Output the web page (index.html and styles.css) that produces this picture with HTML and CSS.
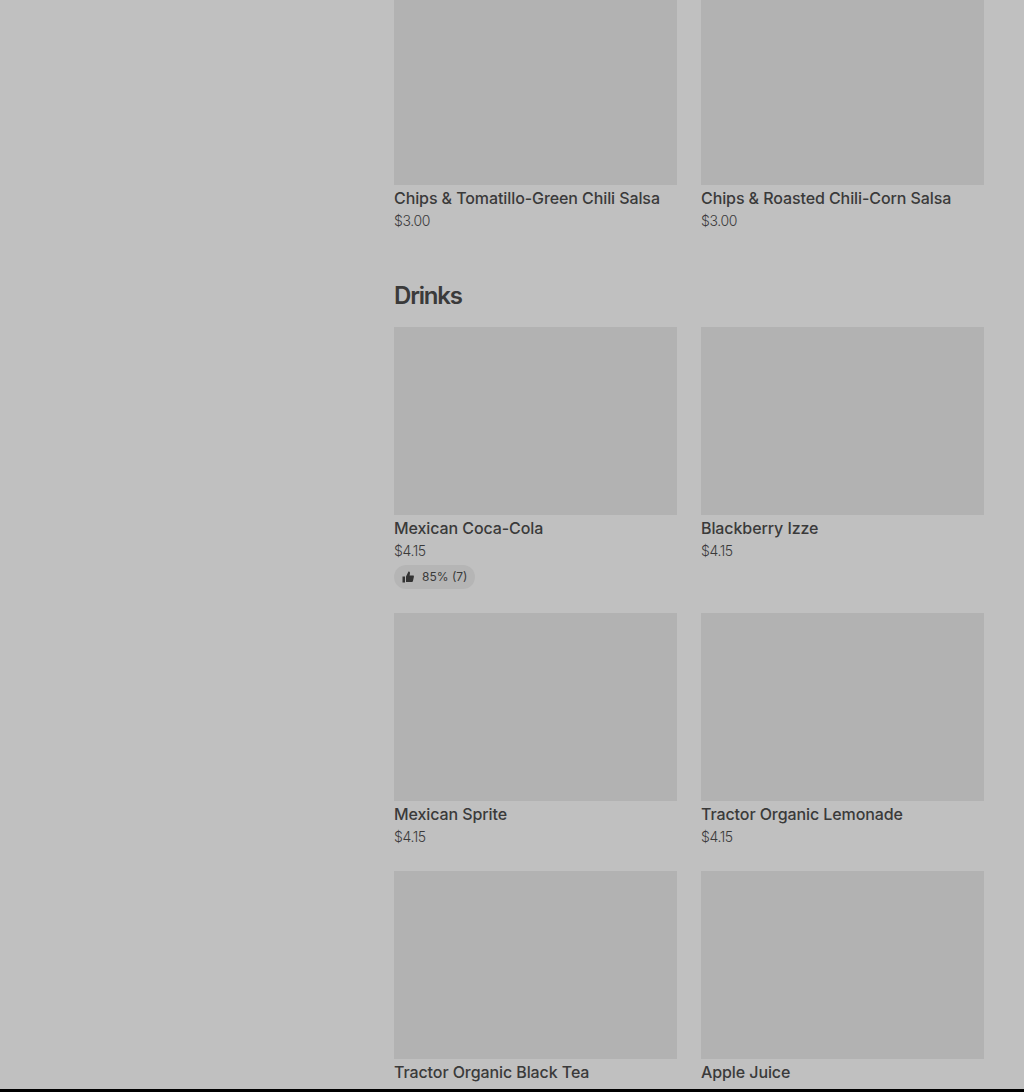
FILE: index.html
```html
<!DOCTYPE html>
<html lang="en">
<head>
<meta charset="utf-8">
<title>Menu</title>
<link rel="stylesheet" href="styles.css">
</head>
<body>
<div class="page">
<main class="menu">
  <section class="grid">
    <article class="card"><div class="img img-cut"></div><h3 class="name">Chips &amp; Tomatillo-Green Chili Salsa</h3><p class="price">$3.00</p></article>
    <article class="card"><div class="img img-cut"></div><h3 class="name">Chips &amp; Roasted Chili-Corn Salsa</h3><p class="price">$3.00</p></article>
  </section>
  <h2 class="heading">Drinks</h2>
  <section class="grid">
    <article class="card"><div class="img"></div><h3 class="name">Mexican Coca-Cola</h3><p class="price">$4.15</p>
      <span class="badge"><svg class="thumb" viewBox="0 0 12 12" width="12" height="12"><path d="M0.5 5.5h2.5v6h-2.5zM4 5.5l2.5-5c1 0 1.5.7 1.5 1.6l-.4 2.4h3.4c.7 0 1 .6.9 1.2l-1 4.6c-.1.5-.5.7-1 .7H4z" fill="#333"/></svg>85% (7)</span></article>
    <article class="card"><div class="img"></div><h3 class="name">Blackberry Izze</h3><p class="price">$4.15</p></article>
    <article class="card"><div class="img"></div><h3 class="name">Mexican Sprite</h3><p class="price">$4.15</p></article>
    <article class="card"><div class="img"></div><h3 class="name">Tractor Organic Lemonade</h3><p class="price">$4.15</p></article>
    <article class="card"><div class="img"></div><h3 class="name">Tractor Organic Black Tea</h3></article>
    <article class="card"><div class="img"></div><h3 class="name">Apple Juice</h3></article>
  </section>
</main>
<div class="bar"></div>
</div>
</body>
</html>
```

FILE: styles.css
```css
* { box-sizing: border-box; }
html, body { margin: 0; padding: 0; }
body { background: #c0c0c0; font-family: Inter, "Liberation Sans", sans-serif; color: #3a3a3a; }
.page { height: 1092px; display: flex; flex-direction: column; overflow: hidden; }
.menu { flex: 1; min-height: 0; overflow: hidden; padding: 0 40px 0 394px; }
.grid { display: grid; grid-template-columns: 283px 283px; column-gap: 24px; row-gap: 24px; }
.card { display: flex; flex-direction: column; align-items: flex-start; }
.img { width: 100%; height: 188px; background: #b2b2b2; }
.img-cut { height: 185px; }
.name { margin: 0; height: 26px; line-height: 26px; font-size: 16px; font-weight: 500; letter-spacing: -0.09px; white-space: nowrap; }
.price { margin: 0; height: 20px; line-height: 20px; font-size: 14px; font-weight: 300; letter-spacing: -0.4px; }
.heading { margin: 49px 0 15px; height: 32px; line-height: 32px; font-size: 24px; font-weight: 600; letter-spacing: -1.2px; }
.badge { display: flex; align-items: center; gap: 8px; height: 24px; margin-top: 4px; padding: 0 8px; border-radius: 12px; background: #b5b5b5; font-size: 12px; line-height: 24px; }
.thumb { flex: none; }
.bar { flex: none; height: 3px; background: #000; }
```
